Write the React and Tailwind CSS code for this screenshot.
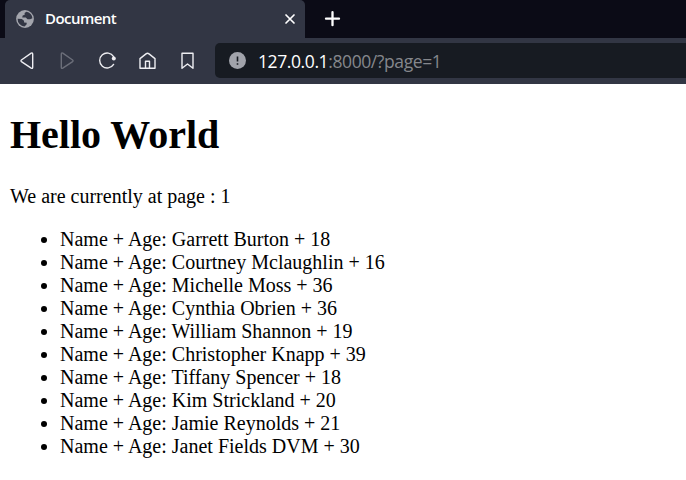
const people = [
  ["Garrett Burton", 18],
  ["Courtney Mclaughlin", 16],
  ["Michelle Moss", 36],
  ["Cynthia Obrien", 36],
  ["William Shannon", 19],
  ["Christopher Knapp", 39],
  ["Tiffany Spencer", 18],
  ["Kim Strickland", 20],
  ["Jamie Reynolds", 21],
  ["Janet Fields DVM", 30],
];

function Icon({ children, className = "" }) {
  return (
    <svg
      viewBox="0 0 20 20"
      className={`h-5 w-5 shrink-0 ${className}`}
      fill="none"
      stroke="currentColor"
      strokeWidth="1.4"
      strokeLinecap="round"
      strokeLinejoin="round"
    >
      {children}
    </svg>
  );
}

function TabBar() {
  return (
    <div className="flex h-[38px] bg-[#0b0b16]">
      <div className="flex w-[300px] ml-[5px] items-center rounded-t-[5px] bg-[#323644] pl-[10px] pr-[5px]">
        <svg viewBox="0 0 20 20" className="h-5 w-5 shrink-0">
          <circle cx="10" cy="10" r="8.9" fill="#a3a5ad" />
          <path
            d="M11.4 2.7 L9.6 4.1 L9.7 5.8 L7.7 6.6 L7.2 8.4 L10.8 8.5 L12.5 10.3 L15.1 10.3 L17.4 9.3 A7.4 7.4 0 0 0 11.4 2.7Z M2.6 9.8 L6.8 10 L9 11.8 L9.1 13.4 L11.8 13.8 L11.5 15.6 L9.5 17.4 A7.4 7.4 0 0 1 2.6 9.8Z"
            fill="#323644"
          />
        </svg>
        <span className="ml-[10px] pb-[2px] font-['Open_Sans','Noto_Sans',sans-serif] text-[15px] leading-5 font-semibold tracking-[-0.55px] text-white">
          Document
        </span>
        <Icon className="ml-auto text-white">
          <path d="M6 6 14 14M14 6 6 14" strokeWidth="1.7" />
        </Icon>
      </div>
      <svg viewBox="0 0 20 20" className="mt-[9px] ml-[18px] h-5 w-5" stroke="#fff" strokeWidth="2.3" strokeLinecap="round">
        <path d="M3 9.7H16M9.5 3.2V16.2" />
      </svg>
    </div>
  );
}

function Toolbar() {
  return (
    <div className="flex h-[46px] bg-[#323644] pt-[5px] text-[#eeeef2]">
      <div className="flex h-[35px] items-center gap-5 pl-[17px]">
        <Icon>
          <path d="M14.2 2.2Q15.7 1.3 15.7 3.2V16.2Q15.7 18 14.2 17.1L4.4 10.6Q3.5 9.8 4.4 9Z" />
        </Icon>
        <Icon className="text-[#6c6f7a]">
          <path d="M5.8 2.2Q4.3 1.3 4.3 3.2V16.2Q4.3 18 5.8 17.1L15.6 10.6Q16.5 9.8 15.6 9Z" />
        </Icon>
        <Icon>
          <path d="M16.6 5.6A7.5 7.5 0 1 0 16.6 13.4" />
          <circle cx="16.8" cy="7.6" r="2" fill="currentColor" stroke="none" />
        </Icon>
        <Icon>
          <path d="M3 7.6V17.2H18V7.6L12 2.9Q10.5 1.7 9 2.9Z M8.5 17V10.2H12.5V17" />
        </Icon>
        <Icon>
          <path d="M5 2.3H16V17.3L10.5 13L5 17.3Z" />
        </Icon>
      </div>
      <div className="ml-[18px] flex h-[35px] flex-1 items-center rounded-l-[5px] bg-[#171b22] pl-[14px]">
        <svg viewBox="0 0 17 17" className="h-[17px] w-[17px]">
          <circle cx="8.5" cy="8.5" r="8.5" fill="#a1a3ab" />
          <path d="M8.5 4.5V9.5M8.5 11.3V12.7" stroke="#171b22" strokeWidth="1.6" />
        </svg>
        <span className="ml-3 font-['Open_Sans','Noto_Sans',sans-serif] text-[17.5px] leading-6 tracking-[-0.4px] whitespace-nowrap text-[#85878c]">
          <span className="text-white">127.0.0.1</span>:8000/?page=1
        </span>
      </div>
    </div>
  );
}

export default function App() {
  return (
    <div className="h-[480px] w-[686px] overflow-hidden bg-white">
      <TabBar />
      <Toolbar />
      <main className="pt-[28px] pl-[10px] font-['Liberation_Serif','Times_New_Roman',serif] text-[20px] leading-[23px] text-black">
        <h1 className="text-[40px] leading-[46px] font-bold">Hello World</h1>
        <p className="mt-[27px]">We are currently at page : 1</p>
        <ul className="mt-5 list-disc pl-[50px]">
          {people.map(([name, age]) => (
            <li key={name}>
              Name + Age: {name} + {age}
            </li>
          ))}
        </ul>
      </main>
    </div>
  );
}
